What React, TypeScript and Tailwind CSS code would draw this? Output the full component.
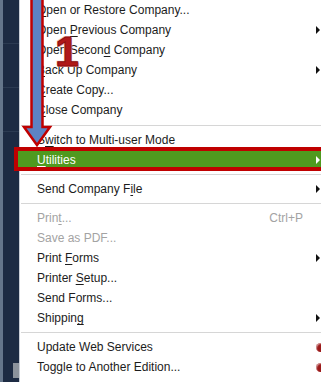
import type { ReactNode } from "react";

type Item = {
  label: ReactNode;
  sub?: boolean;
  disabled?: boolean;
  shortcut?: string;
  badge?: boolean;
};

const u = (s: string) => <u className="underline-offset-[2px]">{s}</u>;

function SubArrow({ white }: { white?: boolean }) {
  return (
    <svg width="4" height="8" viewBox="0 0 4 8" className="shrink-0">
      <path d="M0 0 L4 4 L0 8 Z" fill={white ? "#ffffff" : "#111111"} />
    </svg>
  );
}

function Row({ item }: { item: Item }) {
  return (
    <div className="flex h-5 items-center pl-[17px] pr-px">
      <span
        className={
          "flex-1 whitespace-nowrap " +
          (item.disabled ? "text-[#a3a3a3]" : "text-[#1c1c1c]")
        }
      >
        {item.label}
      </span>
      {item.shortcut && (
        <span className="mr-[17px] text-[#a3a3a3]">{item.shortcut}</span>
      )}
      {item.sub && <SubArrow />}
      {item.badge && (
        <span className="mr-[-6px] h-[9px] w-[10px] rounded-full bg-[#9c1a1a] shadow-[inset_1px_1px_1px_rgba(255,255,255,0.5)]" />
      )}
    </div>
  );
}

function Sep({ h }: { h: string }) {
  return (
    <div className={"flex items-center pl-px " + h}>
      <div className="h-px w-full bg-[#d6d6d6]" />
    </div>
  );
}

const top: Item[] = [
  { label: <>{u("O")}pen or Restore Company...</> },
  { label: <>Open {u("P")}revious Company</>, sub: true },
  { label: <>Open Secon{u("d")} Company</> },
  { label: <>{u("B")}ack Up Company</>, sub: true },
  { label: <>{u("C")}reate Copy...</> },
  { label: <>{u("C")}lose Company</> },
];

const printGroup: Item[] = [
  { label: <>Prin{u("t")}...</>, disabled: true, shortcut: "Ctrl+P" },
  { label: "Save as PDF...", disabled: true },
  { label: <>Print {u("F")}orms</>, sub: true },
  { label: <>Printer {u("S")}etup...</> },
  { label: "Send Forms..." },
  { label: <>Shippin{u("g")}</>, sub: true },
];

export default function App() {
  return (
    <div className="relative flex h-[382px] w-[321px] overflow-hidden bg-white font-['Liberation_Sans',Arial,sans-serif] text-[12px]">
      {/* dark window edge on the left */}
      <div className="flex w-5 shrink-0">
        <div className="w-1 bg-[#65768b]" />
        <div className="flex flex-1 flex-col bg-[#1d2b43]">
          <div className="h-[44px] border-b border-[#2c3b52]" />
          <div className="h-[44px] border-b border-[#2c3b52]" />
          <div className="h-[44px] border-b border-[#2c3b52]" />
          <div className="flex-1" />
          <div className="mb-1 ml-[10px] h-[15px] w-[6px] bg-[#8c939c]" />
        </div>
        <div className="w-[2px] bg-[#c9ced6]" />
      </div>

      {/* menu */}
      <div className="flex flex-1 flex-col bg-white">
        {top.map((it, i) => (
          <Row key={i} item={it} />
        ))}
        <Sep h="h-[10px]" />
        <Row item={{ label: <>S{u("w")}itch to Multi-user Mode</> }} />

        <div className="relative flex h-5 items-center pl-[17px] pr-px">
          <span className="absolute -bottom-px -left-[6px] -right-2 -top-[3px] border-4 border-[#c00000] bg-[#4f9a1f]" />
          <span className="relative flex-1 text-white">
            {u("U")}tilities
          </span>
          <span className="relative flex">
            <SubArrow white />
          </span>
        </div>

        <Sep h="h-[9px]" />
        <Row item={{ label: <>Send Company F{u("i")}le</>, sub: true }} />
        <Sep h="h-[9px]" />
        {printGroup.map((it, i) => (
          <Row key={i} item={it} />
        ))}
        <Sep h="h-[9px]" />
        <Row item={{ label: "Update Web Services", badge: true }} />
        <Row item={{ label: "Toggle to Another Edition...", badge: true }} />
      </div>

      {/* annotation: arrow and step number */}
      <svg
        className="absolute left-0 top-0"
        width="60"
        height="150"
        viewBox="0 0 60 150"
      >
        <polygon
          points="31.5,-2 42.5,-2 42.5,127 50,127 37,145 24,127 31.5,127"
          fill="#5d83c4"
          stroke="#c00000"
          strokeWidth="2.5"
          strokeLinejoin="miter"
        />
      </svg>
      <span className="absolute left-[55px] top-[30px] font-['Liberation_Sans',Arial,sans-serif] text-[43px] font-bold leading-none text-[#b01818] [-webkit-text-stroke:1px_#8c1010] [text-shadow:1px_1px_0_#e8a0a0,-1px_-1px_0_#f0c0c0]">
        1
      </span>
    </div>
  );
}
